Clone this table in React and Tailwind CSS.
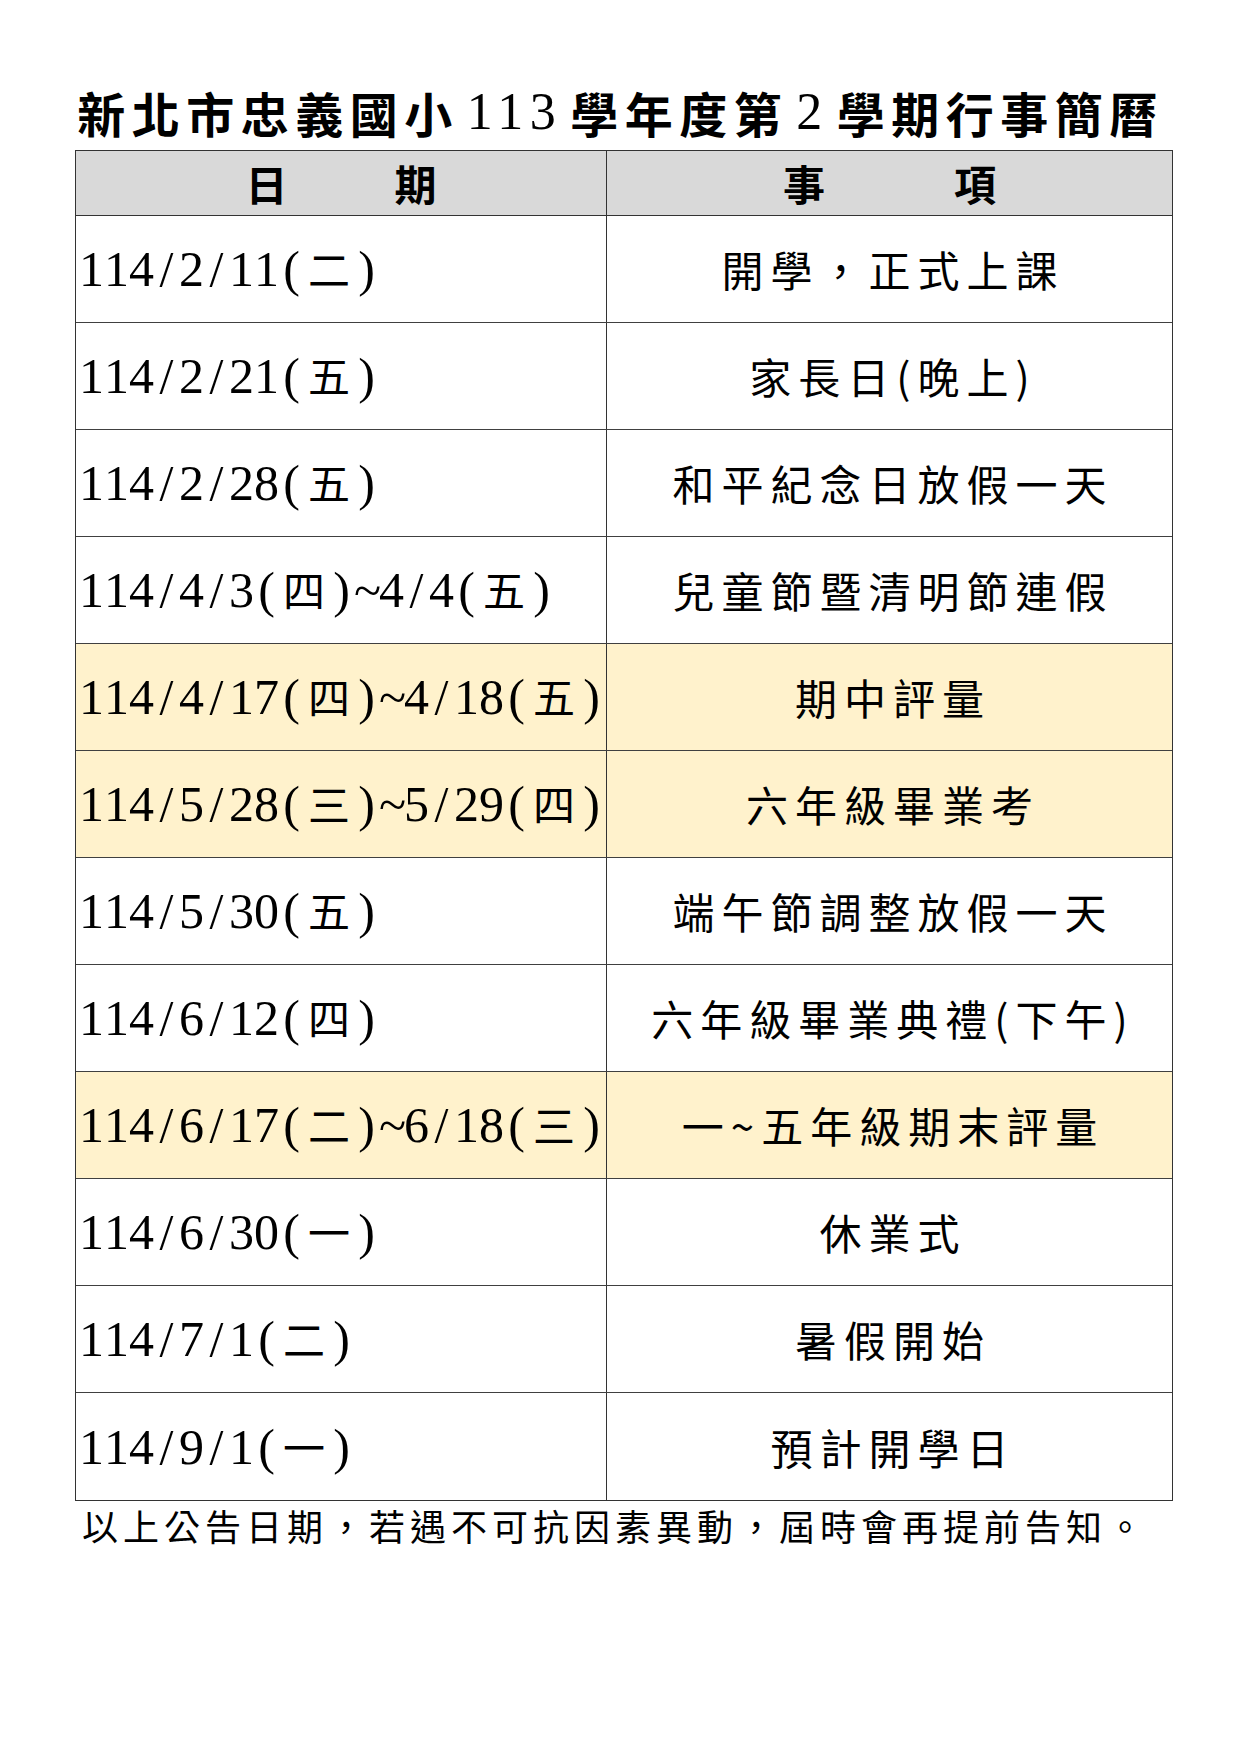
import React from "react";

const rows = [
  ["114/2/11(二)", "開學，正式上課", false],
  ["114/2/21(五)", "家長日(晚上)", false],
  ["114/2/28(五)", "和平紀念日放假一天", false],
  ["114/4/3(四)~4/4(五)", "兒童節暨清明節連假", false],
  ["114/4/17(四)~4/18(五)", "期中評量", true],
  ["114/5/28(三)~5/29(四)", "六年級畢業考", true],
  ["114/5/30(五)", "端午節調整放假一天", false],
  ["114/6/12(四)", "六年級畢業典禮(下午)", false],
  ["114/6/17(二)~6/18(三)", "一~五年級期末評量", true],
  ["114/6/30(一)", "休業式", false],
  ["114/7/1(二)", "暑假開始", false],
  ["114/9/1(一)", "預計開學日", false],
];

function DateText({ text }) {
  return (
    <div className="flex items-baseline leading-none">
      {Array.from(text).map((ch, i) =>
        /[\u0000-\u007f]/.test(ch) ? (
          <span
            key={i}
            className="inline-block w-[25px] text-center font-['Liberation_Serif',serif] text-[50px] leading-none"
          >
            {ch}
          </span>
        ) : (
          <span
            key={i}
            className="inline-block w-[50px] text-center font-['Noto_Sans_CJK_TC',sans-serif] text-[42px] leading-none"
          >
            {ch}
          </span>
        )
      )}
    </div>
  );
}

export default function App() {
  return (
    <div className="w-[1241px] min-h-[1755px] bg-white text-black pt-[80px] font-['Noto_Sans_CJK_TC',sans-serif]">
      <div className="h-[64px] mb-[6px] flex items-center justify-center text-[48px] font-bold tracking-[6.5px] leading-none whitespace-nowrap">
        <span>新北市忠義國小</span>
        <span className="px-[8px] font-['Liberation_Serif',serif] font-normal text-[52px]">113</span>
        <span>學年度第</span>
        <span className="px-[8px] font-['Liberation_Serif',serif] font-normal text-[52px]">2</span>
        <span>學期行事簡曆</span>
      </div>

      <div className="ml-[75px] w-[1098px] border border-[#333333]">
        <div className="flex h-[65px] bg-[#d9d9d9] border-b border-[#333333]">
          <div className="w-[531px] border-r border-[#333333] flex items-center justify-center gap-[107px] text-[42px] font-bold leading-none">
            <span>日</span>
            <span>期</span>
          </div>
          <div className="flex-1 flex items-center justify-center gap-[129px] text-[42px] font-bold leading-none">
            <span>事</span>
            <span>項</span>
          </div>
        </div>

        {rows.map(([d, e, hl], i) => (
          <div
            key={i}
            className={
              "flex h-[107px] " +
              (i < rows.length - 1 ? "border-b border-[#404040] " : "") +
              (hl ? "bg-[#fff2cc]" : "bg-white")
            }
          >
            <div className="w-[531px] border-r border-[#333333] flex items-center pl-[3px]">
              <DateText text={d} />
            </div>
            <div className="flex-1 flex items-center justify-center pl-[7px] text-[42px] tracking-[7px] leading-none whitespace-nowrap">
              {e}
            </div>
          </div>
        ))}
      </div>

      <div className="ml-[75px] pl-[7px] h-[48px] flex items-center text-[36px] tracking-[5px] leading-none whitespace-nowrap">
        以上公告日期，若遇不可抗因素異動，屆時會再提前告知。
      </div>
    </div>
  );
}
